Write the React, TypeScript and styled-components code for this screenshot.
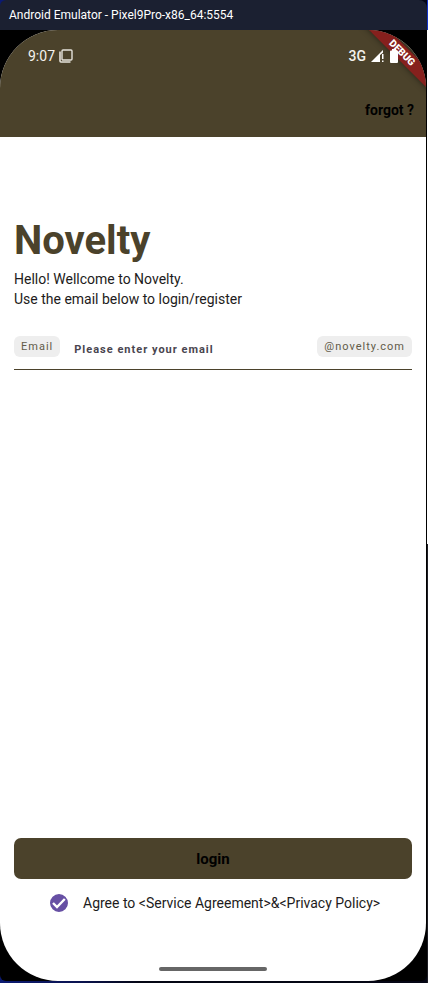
import React, { useState } from "react";
import styled, { createGlobalStyle } from "styled-components";

const olive = "#4b422b";

const GlobalStyle = createGlobalStyle`
  * { box-sizing: border-box; }
  html, body { margin: 0; background: #040614; }
  body { font-family: Roboto, "Noto Sans", sans-serif; }
`;

const Window = styled.div`
  display: flex;
  flex-direction: column;
  min-height: 100vh;
  padding-bottom: 2px;
  background:
    linear-gradient(#1233c8 0 30px, #fff 30px 544px, #1c1c22 544px) right / 1px 100% no-repeat,
    linear-gradient(90deg, #0b1a72 0, #0a1350 80px, #040614 140px);
`;

const TitleBar = styled.header`
  flex: none;
  height: 30px;
  margin-right: 1px;
  padding: 0 9px;
  display: flex;
  align-items: center;
  border-radius: 6px 8px 0 0;
  background: #1b2031;
  color: #fff;
  font: 12px/16px Roboto, sans-serif;
`;

const Bezel = styled.div`
  flex: 1;
  display: flex;
  padding-right: 1px;
  margin-right: 1px;
  border-radius: 0 0 6px 6px;
  background: #000;
`;

const Screen = styled.div`
  position: relative;
  flex: 1;
  display: flex;
  flex-direction: column;
  overflow: hidden;
  border-radius: 58px;
  background: #fff;
`;

const TopArea = styled.div`
  height: 107px;
  display: flex;
  flex-direction: column;
  justify-content: space-between;
  padding: 16px 12px 17px 28px;
  background: ${olive};
`;

const StatusBar = styled.div`
  position: relative;
  z-index: 1;
  display: flex;
  justify-content: space-between;
  padding-right: 16px;
  color: #f4f2ee;
  font-size: 14px;
  line-height: 20px;
`;

const StatusGroup = styled.div<{ $strong?: boolean }>`
  display: flex;
  align-items: center;
  gap: ${(p) => (p.$strong ? 5 : 4)}px;
  font-weight: ${(p) => (p.$strong ? 500 : 400)};
`;

const ForgotButton = styled.button`
  align-self: flex-end;
  padding: 0;
  border: 0;
  background: none;
  color: #000;
  font: 700 14px/20px Roboto, sans-serif;
  cursor: pointer;
`;

const DebugRibbon = styled.div`
  position: absolute;
  top: 16px;
  right: -26px;
  width: 100px;
  height: 14px;
  transform: rotate(45deg);
  background: #86201d;
  box-shadow: 0 0 6px rgba(0, 0, 0, 0.5);
  color: #fff;
  font-size: 10px;
  font-weight: 900;
  line-height: 14px;
  text-align: center;
`;

const Form = styled.form`
  flex: 1;
  display: flex;
  flex-direction: column;
  padding: 80px 14px 10px;
`;

const Title = styled.h1`
  margin: 0;
  color: ${olive};
  font-size: 40px;
  font-weight: 700;
  line-height: 48px;
`;

const Intro = styled.p`
  margin: 4px 0 27px;
  color: #1d1b20;
  font-size: 14px;
  line-height: 20px;
`;

const EmailRow = styled.div`
  display: flex;
  align-items: flex-start;
  height: 34px;
  border-bottom: 1px solid ${olive};
`;

const pill = `
  flex: none;
  padding: 1px 7px 0;
  border-radius: 6px;
  background: #eee;
  color: #625b49;
  font-size: 11px;
  line-height: 20px;
  letter-spacing: 1px;
`;

const PillLabel = styled.label`${pill}`;
const PillSuffix = styled.span`${pill}`;

const EmailInput = styled.input`
  flex: 1;
  min-width: 0;
  height: 26px;
  padding: 0 14px;
  border: 0;
  outline: 0;
  background: none;
  color: #1d1b20;
  font: 700 11px/16px Roboto, sans-serif;
  letter-spacing: 1px;
  &::placeholder { color: #49454f; opacity: 1; }
`;

const LoginButton = styled.button`
  height: 41px;
  margin-top: auto;
  border: 0;
  border-radius: 7px;
  background: ${olive};
  color: #000;
  font: 700 15px/20px Roboto, sans-serif;
  cursor: pointer;
`;

const Agreement = styled.label`
  display: flex;
  align-items: center;
  gap: 14px;
  height: 20px;
  margin: 14px 0 54px 35px;
  color: #1d1b20;
  font-size: 14px;
  line-height: 20px;
`;

const CheckWrap = styled.span`
  display: grid;
  width: 20px;
  height: 20px;
  place-items: center;
  > * { grid-area: 1 / 1; }
  svg { pointer-events: none; }
`;

const Checkbox = styled.input`
  appearance: none;
  width: 18px;
  height: 18px;
  margin: 0;
  border: 2px solid #6750a4;
  border-radius: 50%;
  &:checked { background: #6750a4; }
`;

const HomeBar = styled.div`
  align-self: center;
  width: 108px;
  height: 4px;
  border-radius: 2px;
  background: #666;
`;

const CopiesIcon = () => (
  <svg width="14" height="14" viewBox="0 0 14 14" fill="none" stroke="#e6e3dc">
    <rect x="3" y="1" width="10" height="10" rx="1" strokeWidth="1.4" />
    <path d="M1 2.5V12a1 1 0 0 0 1 1h9.5" strokeWidth="1.6" />
  </svg>
);

const SignalIcon = () => (
  <svg width="14" height="14" viewBox="0 0 14 14" fill="#fff">
    <path d="M0 13 12 1v3.500H9.500V13Z" fillOpacity="0.25" />
    <path d="M0 13 12 1v2.500L9 6v7Z" />
    <path d="M11 5h1.500v5H11zM11 11.400h1.500V13H11z" />
    <path d="M9 6h1.500v7H9z" fill={olive} />
  </svg>
);

const BatteryIcon = () => (
  <svg width="8" height="14" viewBox="0 0 8 14" fill="#fff">
    <path d="M2 0h4v1.500h1q1 0 1 1V13q0 1-1 1H1q-1 0-1-1V2.500q0-1 1-1h1Z" />
  </svg>
);

export default function App() {
  const [email, setEmail] = useState("");
  const [agreed, setAgreed] = useState(true);

  return (
    <Window>
      <GlobalStyle />
      <TitleBar>Android Emulator - Pixel9Pro-x86_64:5554</TitleBar>
      <Bezel>
        <Screen>
          <TopArea>
            <StatusBar>
              <StatusGroup>
                9:07
                <CopiesIcon />
              </StatusGroup>
              <StatusGroup $strong>
                3G
                <SignalIcon />
                <BatteryIcon />
              </StatusGroup>
            </StatusBar>
            <ForgotButton type="button">forgot ?</ForgotButton>
          </TopArea>
          <DebugRibbon>DEBUG</DebugRibbon>
          <Form onSubmit={(e) => e.preventDefault()}>
            <Title>Novelty</Title>
            <Intro>
              Hello! Wellcome to Novelty.
              <br />
              Use the email below to login/register
            </Intro>
            <EmailRow>
              <PillLabel htmlFor="email">Email</PillLabel>
              <EmailInput
                id="email"
                placeholder="Please enter your email"
                value={email}
                onChange={(e) => setEmail(e.target.value)}
              />
              <PillSuffix>@novelty.com</PillSuffix>
            </EmailRow>
            <LoginButton type="submit">login</LoginButton>
            <Agreement>
              <CheckWrap>
                <Checkbox
                  type="checkbox"
                  checked={agreed}
                  onChange={(e) => setAgreed(e.target.checked)}
                />
                {agreed && (
                  <svg width="18" height="18" viewBox="0 0 18 18" fill="none" stroke="#fff" strokeWidth="2.4">
                    <path d="m3 9 4 4 7.800-8" />
                  </svg>
                )}
              </CheckWrap>
              Agree to &lt;Service Agreement&gt;&amp;&lt;Privacy Policy&gt;
            </Agreement>
            <HomeBar />
          </Form>
        </Screen>
      </Bezel>
    </Window>
  );
}
